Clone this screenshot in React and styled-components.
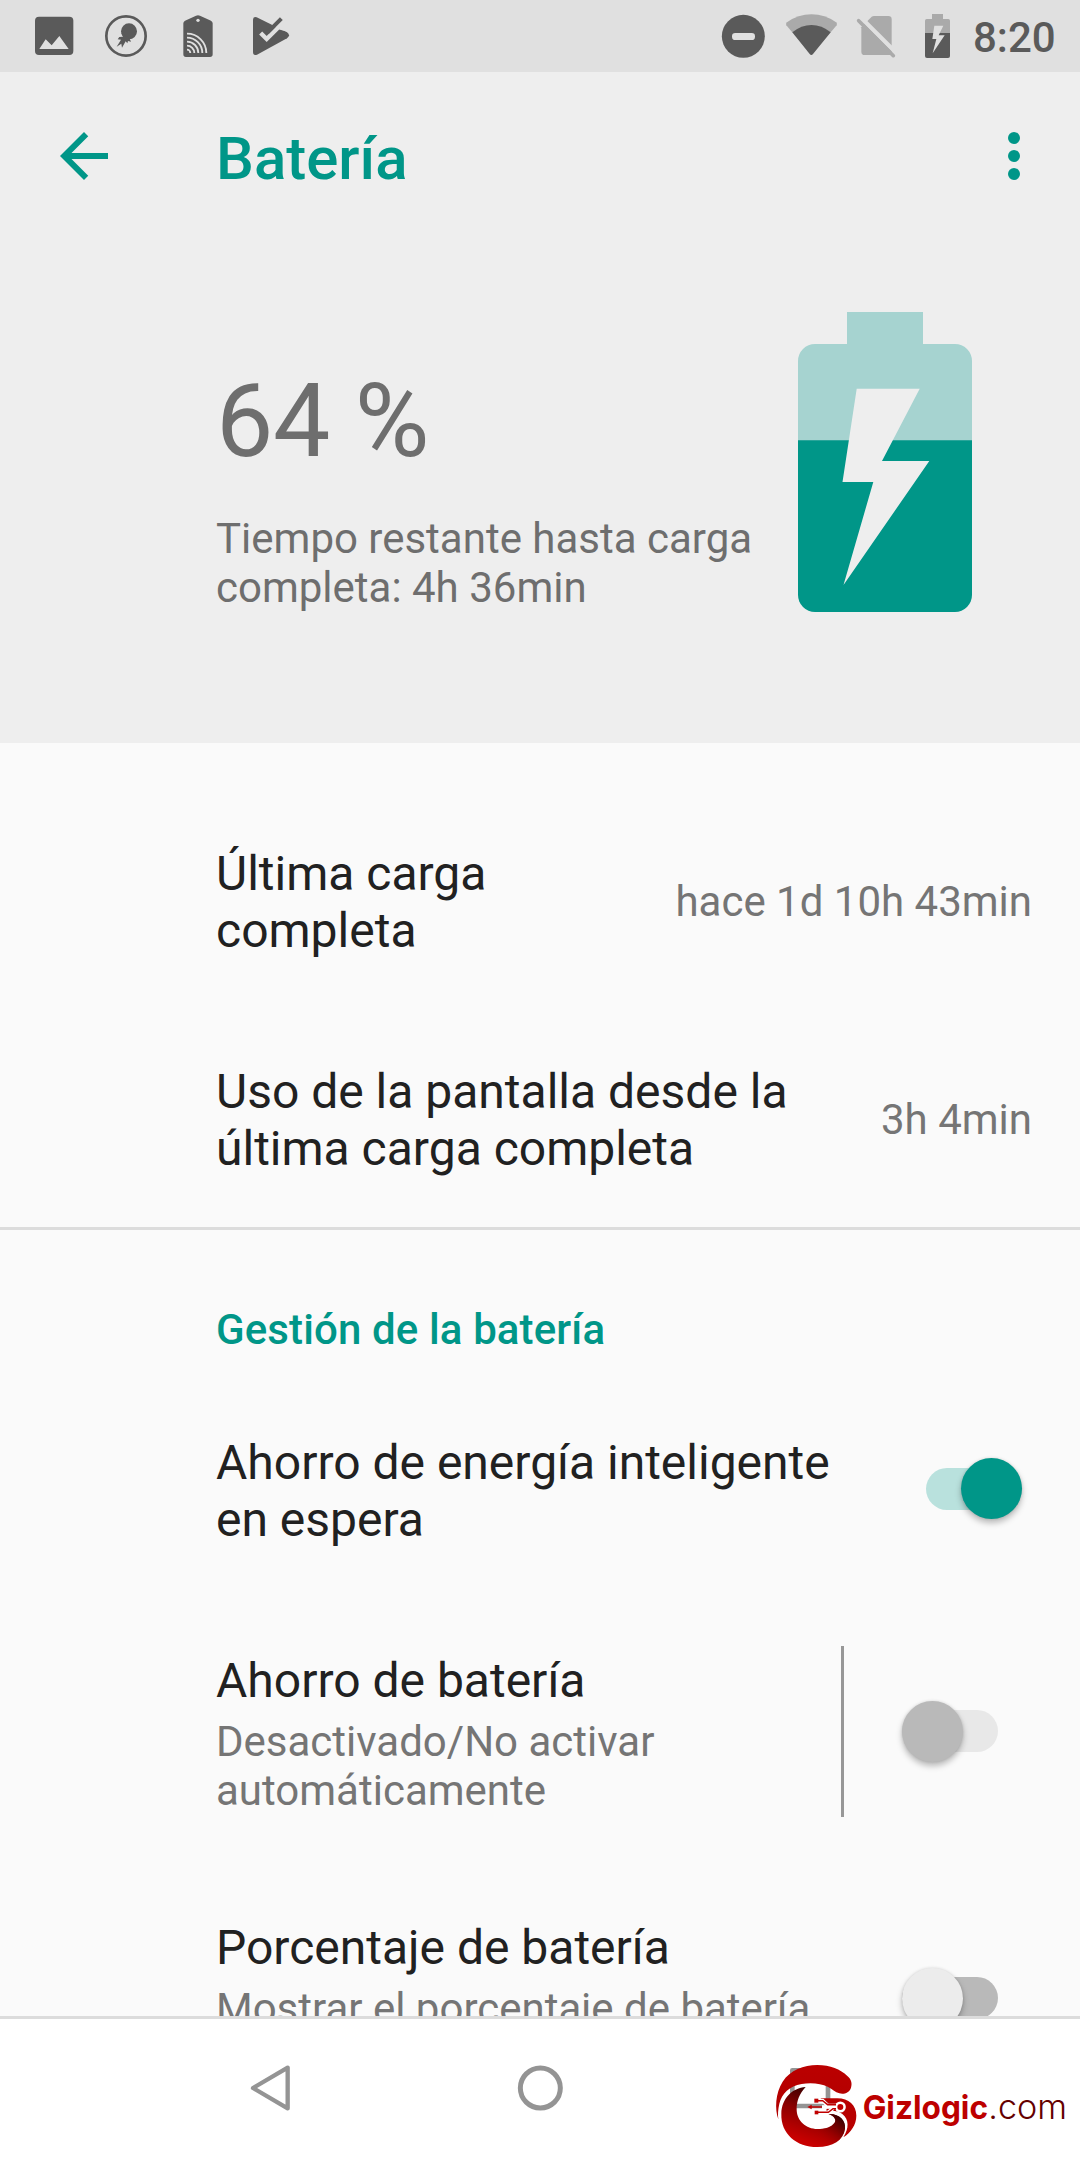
import { useState } from "react";
import styled, { createGlobalStyle } from "styled-components";


const GlobalStyle = createGlobalStyle`
    * {
        box-sizing: border-box;
    }

    body {
        margin: 0;
        background: #fafafa;
        font-family: Roboto, sans-serif;
    }
`;

const Screen = styled.div`
    position: relative;
    display: flex;
    flex-direction: column;
    width: 1080px;
    height: 2160px;
    overflow: hidden;
    background: #fafafa;
`;

const StatusBar = styled.div`
    display: flex;
    justify-content: space-between;
    flex: none;
    height: 72px;
    padding: 13px 0 0 30px;
    background: #e0e0e0;
    color: #5a5a5a;
`;

const Notifications = styled.div`
    display: flex;
    gap: 24px;
`;

const SystemIcons = styled.div`
    display: flex;
    width: 361px;
`;

const Icon = styled.svg`
    display: block;
    flex: none;
    width: ${(props) => props.$w || 48}px;
    height: ${(props) => props.$h || 48}px;
`;

const Clock = styled.div`
    padding: 0 0 0 7px;
    font-size: 42px;
    font-weight: 500;
    line-height: 49px;
`;

const Header = styled.header`
    flex: none;
    height: 671px;
    background: #eeeeee;
`;

const Toolbar = styled.div`
    display: flex;
    align-items: center;
    height: 168px;
    padding: 0 30px 0 48px;
    color: #009688;
`;

const Title = styled.h1`
    flex: 1;
    margin: 0;
    padding: 5px 0 0 96px;
    font-size: 60px;
    font-weight: 500;
    line-height: 71px;
`;

const IconButton = styled.button`
    width: 72px;
    height: 72px;
    padding: 0;
    border: 0;
    background: none;
    color: inherit;
`;

const Summary = styled.div`
    display: flex;
    justify-content: space-between;
    padding: 72px 108px 0 216px;
    color: #6e6e6e;
`;

const Level = styled.div`
    padding-top: 49px;
    font-size: 102px;
    line-height: 120px;
    letter-spacing: -0.4px;
`;

const TimeLeft = styled.div`
    width: 560px;
    margin-top: 33px;
    font-size: 42px;
    line-height: 49px;
`;

const List = styled.main`
    flex: 1;
    min-height: 0;
    padding-top: 50px;
    overflow: hidden;
`;

const Row = styled.div`
    display: flex;
    align-items: center;
    gap: 48px;
    padding: 52px ${(props) => props.$right || 48}px 52px 216px;
`;

const LastRow = styled(Row)`
    padding-bottom: 50px;
    border-bottom: 3px solid #dcdcdc;
`;

const RowText = styled.div`
    flex: 1;
`;

const RowTitle = styled.div`
    color: #212121;
    font-size: 48px;
    line-height: 57px;
`;

const RowSummary = styled.div`
    min-height: 98px;
    margin-top: 8px;
    color: #757575;
    font-size: 42px;
    line-height: 49px;
`;

const Value = styled.div`
    margin-bottom: 2px;
    color: #757575;
    font-size: 42px;
    line-height: 49px;
    white-space: nowrap;
`;

const Category = styled.h2`
    margin: 0;
    padding: 75px 0 28px 216px;
    color: #009688;
    font-size: 42px;
    font-weight: 500;
    line-height: 49px;
    letter-spacing: 0.12px;
`;

const Separator = styled.div`
    width: 3px;
    height: 171px;
    margin: -50px 10px -46px 0;
    background: #979797;
`;

const colors = {
    on: { track: "#b9e1dd", thumb: "#009688" },
    off: { track: "#b9b9b9", thumb: "#ececec" },
    disabled: { track: "#e8e8e8", thumb: "#b9b9b9" },
};

const Track = styled.button`
    display: flex;
    align-items: center;
    justify-content: ${(props) => (props.$kind === "on" ? "flex-end" : "flex-start")};
    flex: none;
    width: 96px;
    height: 42px;
    margin-bottom: 5px;
    padding: 0;
    border: 0;
    border-radius: 21px;
    background: ${(props) => colors[props.$kind].track};
`;

const Thumb = styled.span`
    flex: none;
    width: 61px;
    height: 61px;
    border-radius: 50%;
    background: ${(props) => colors[props.$kind].thumb};
    box-shadow: 0 4px 6px rgba(0, 0, 0, 0.26), 0 0 3px rgba(0, 0, 0, 0.12);
`;

const NavBar = styled.nav`
    display: grid;
    grid-template-columns: repeat(3, 270px);
    justify-content: center;
    align-items: center;
    justify-items: center;
    flex: none;
    height: 144px;
    padding-bottom: 3px;
    border-top: 3px solid #dcdcdc;
    background: #ffffff;
    color: #949494;
`;

// sits over the navigation bar
const Watermark = styled.svg`
    position: absolute;
    right: 0;
    bottom: 0;
    width: 320px;
    height: 130px;
    font-family: Inter, sans-serif;
    font-size: 100px;
`;


function Switch({ kind, onClick }){
    return(
        <Track $kind={kind} onClick={onClick}>
            <Thumb $kind={kind} />
        </Track>
    );
}

function NotificationIcons(){
    return(
        <Notifications>
            <Icon viewBox="90 39 144 144" fill="currentColor">
                <rect x="105" y="50" width="115" height="115" rx="12" />
                <path d="M118 147L137 118L155 136L178 108L206 147Z" fill="#e0e0e0" />
            </Icon>

            <Icon viewBox="306 39 144 144" fill="currentColor">
                <circle cx="378" cy="108" r="59" fill="none" stroke="currentColor" strokeWidth="8" />
                <circle cx="387" cy="94" r="24" />
                <path d="M364 99L369 110L358 111L353 118L363 119L350 140L364 131L366 143L377 124L382 130L384 123L393 125L389 116Z" />
            </Icon>

            <Icon viewBox="522 39 144 144" fill="currentColor">
                <path d="M550 70Q550 65 555 62L588 47Q594 44 600 47L633 62Q638 65 638 70V163Q638 171 630 171H558Q550 171 550 163Z" />
                <circle cx="594" cy="61" r="5" fill="#e0e0e0" />
                <g fill="none" stroke="#e0e0e0" strokeWidth="5.5">
                    <path d="M561 101A58 58 0 0 1 619 159" />
                    <path d="M561 113A46 46 0 0 1 607 159" />
                    <path d="M561 125A34 34 0 0 1 595 159" />
                    <path d="M561 137A22 22 0 0 1 583 159" />
                    <path d="M561 149A10 10 0 0 1 571 159" />
                </g>
            </Icon>

            <Icon viewBox="738 39 144 144" fill="currentColor">
                <path d="M759 59Q759 48 770 52L861 97Q873 106 861 115L771 164Q759 168 759 156Z" />
                <path d="M815 75L840 50L870 90L845 92Z" fill="#e0e0e0" />
                <path d="M782 99L800 117L852 65" fill="none" stroke="#e0e0e0" strokeWidth="13" />
                <path d="M802 98L844 56" stroke="currentColor" strokeWidth="12" />
                <path d="M820 110L842 89L862 99L850 115Z" />
            </Icon>
        </Notifications>
    );
}

function StatusIcons(){
    return(
        <SystemIcons>
            <Icon $w={56} viewBox="57 39 168 144">
                <circle cx="130" cy="109" r="64.5" fill="currentColor" />
                <rect x="96" y="99" width="69" height="21" rx="10" fill="#e0e0e0" />
            </Icon>

            <Icon $w={72} viewBox="225 39 216 144">
                <path d="M334 165L259 76Q256 71 261 67Q294 43 334.5 43Q375 43 408 67Q413 71 410 76Z" fill="#aaaaaa" />
                <path d="M277 97Q304 75 334.500 75Q365 75 392 97L339 162Q334 168 329 162Z" fill="currentColor" />
            </Icon>

            <Icon $w={62} viewBox="441 39 186 144">
                <path d="M484 82L515 50Q518 48 522 48H565Q575 48 575 58V155Q575 165 565 165H494Q484 165 484 155Z" fill="#aaaaaa" />
                <path d="M486 56L590 160" stroke="#e0e0e0" strokeWidth="13" />
                <path d="M476 62L580 167" stroke="#aaaaaa" strokeWidth="11" strokeLinecap="round" />
            </Icon>

            <Icon $w={57} viewBox="627 39 171 144">
                <path d="M675 99V62Q675 57 680 57H696V42H729V57H745Q750 57 750 62V99Z" fill="#aaaaaa" />
                <path d="M675 99H750V168Q750 174 744 174H681Q675 174 675 168Z" fill="currentColor" />
                <path d="M703 77H730L716 106H734L698 160L709 117H697Z" fill="#e0e0e0" />
            </Icon>

            <Clock>8:20</Clock>
        </SystemIcons>
    );
}

function BatteryMeter(){
    return(
        <Icon $w={174} $h={300} viewBox="0 0 174 300">
            <path d="M0 129V49A17 17 0 0 1 17 32H49V0H125V32H157A17 17 0 0 1 174 49V129Z" fill="#a6d3d0" />
            <path d="M0 128.300H174V283A17 17 0 0 1 157 300H17A17 17 0 0 1 0 283Z" fill="#009688" />
            <path d="M58.700 76.700H121.700L84 149H131.300L45.500 273L75.300 170H44.500Z" fill="#eeeeee" />
        </Icon>
    );
}

function Logo(){
    return(
        <Watermark viewBox="0 0 960 390">
            <defs>
                <linearGradient id="bowl" gradientUnits="userSpaceOnUse" x1="150" y1="175" x2="95" y2="320">
                    <stop offset="0" stopColor="#3a0000" />
                    <stop offset="0.45" stopColor="#8a0000" />
                    <stop offset="1" stopColor="#c80000" />
                </linearGradient>
                <linearGradient id="tail" gradientUnits="userSpaceOnUse" x1="250" y1="265" x2="185" y2="340">
                    <stop offset="0" stopColor="#300000" />
                    <stop offset="1" stopColor="#c80000" stopOpacity="0" />
                </linearGradient>
                <linearGradient id="hook" x1="0" y1="0" x2="0" y2="1">
                    <stop offset="0" stopColor="#bb0000" />
                    <stop offset="1" stopColor="#b00000" />
                </linearGradient>
            </defs>

            <path d="M55 268C44 236 46 190 68 155C91 120 131 105 172 105C211 105 241 118 262 138C274 148 277 160 273 173C268 188 252 194 238 190C226 187 216 176 203 170C184 160 151 157 125 162C88 169 66 190 58 221C54 238 53 254 55 268Z" fill="url(#hook)" />
            <path d="M137 171C97 174 65 205 64 251C62 311 109 351 172 351C218 351 250 331 255 296C258 270 236 250 205 252C223 258 230 269 224 278C214 292 194 297 172 297C138 297 111 272 110 240C109 213 119 190 137 171Z" fill="url(#bowl)" />
            <path d="M205 252C223 258 230 269 224 278C214 292 194 297 172 297L172 351C218 351 250 331 255 296C258 270 236 250 205 252Z" fill="url(#tail)" />
            <path d="M181 205H232C266 205 289 226 289 257C289 284 273 307 250 322C267 296 268 269 247 252C234 241 214 241 198 244L205 220Z" fill="#b80000" />

            <g fill="none" stroke="#ffffff" strokeWidth="11">
                <path d="M170 212H188L203 227H232" />
                <path d="M186 231H232" />
                <path d="M170 247H205L220 234" />
                <circle cx="241" cy="231" r="11" />
            </g>
            <g fill="none" stroke="#c00000" strokeWidth="4.5">
                <path d="M170 212H188L203 224H228" />
                <path d="M150 231H186" />
                <path d="M170 247H205L219 236H228" />
            </g>
            <g fill="#c00000">
                <rect x="163" y="206" width="12" height="12" />
                <path d="M142 231L155 224V238Z" />
                <rect x="164" y="242" width="11" height="11" />
                <circle cx="241" cy="231" r="9" />
            </g>

            <text x="308" y="266" fill="#bd0000" fontWeight="700" textLength="376" lengthAdjust="spacingAndGlyphs">Gizlogic</text>
            <text x="685" y="266" fill="#650000" fontWeight="300" textLength="236" lengthAdjust="spacingAndGlyphs">.com</text>
        </Watermark>
    );
}


export default function App(){

    const [standby, setStandby] = useState(true)
    const [percentage, setPercentage] = useState(false)

    return(
        <Screen>
            <GlobalStyle />

            <StatusBar>
                <NotificationIcons />
                <StatusIcons />
            </StatusBar>

            <Header>
                <Toolbar>
                    <IconButton>
                        <Icon $w={72} $h={72} viewBox="0 0 24 24" fill="currentColor">
                            <path d="M20 11H7.830l5.590-5.590L12 4l-8 8 8 8 1.410-1.410L7.830 13H20v-2z" />
                        </Icon>
                    </IconButton>
                    <Title>Batería</Title>
                    <IconButton>
                        <Icon $w={72} $h={72} viewBox="0 0 24 24" fill="currentColor">
                            <circle cx="12" cy="6" r="2" />
                            <circle cx="12" cy="12" r="2" />
                            <circle cx="12" cy="18" r="2" />
                        </Icon>
                    </IconButton>
                </Toolbar>

                <Summary>
                    <div>
                        <Level>64 %</Level>
                        <TimeLeft>Tiempo restante hasta carga completa: 4h 36min</TimeLeft>
                    </div>
                    <BatteryMeter />
                </Summary>
            </Header>

            <List>
                <Row>
                    <RowText>
                        <RowTitle>Última carga completa</RowTitle>
                    </RowText>
                    <Value>hace 1d 10h 43min</Value>
                </Row>

                <LastRow>
                    <RowText>
                        <RowTitle>Uso de la pantalla desde la última carga completa</RowTitle>
                    </RowText>
                    <Value>3h 4min</Value>
                </LastRow>

                <Category>Gestión de la batería</Category>

                <Row $right={58}>
                    <RowText>
                        <RowTitle>Ahorro de energía inteligente en espera</RowTitle>
                    </RowText>
                    <Switch kind={standby ? "on" : "off"} onClick={() => setStandby(!standby)} />
                </Row>

                <Row $right={82}>
                    <RowText>
                        <RowTitle>Ahorro de batería</RowTitle>
                        <RowSummary>Desactivado/No activar automáticamente</RowSummary>
                    </RowText>
                    <Separator />
                    <Switch kind="disabled" />
                </Row>

                <Row $right={82}>
                    <RowText>
                        <RowTitle>Porcentaje de batería</RowTitle>
                        <RowSummary>Mostrar el porcentaje de batería</RowSummary>
                    </RowText>
                    <Switch kind={percentage ? "on" : "off"} onClick={() => setPercentage(!percentage)} />
                </Row>
            </List>

            <NavBar>
                <Icon viewBox="0 0 144 144" fill="none" stroke="currentColor" strokeWidth="13" strokeLinejoin="round">
                    <path d="M21 72L125 11V133Z" />
                </Icon>
                <Icon viewBox="0 0 144 144" fill="none" stroke="currentColor" strokeWidth="15">
                    <circle cx="73" cy="72" r="60" />
                </Icon>
                <Icon viewBox="0 0 144 144" fill="none" stroke="currentColor" strokeWidth="14" strokeLinejoin="round">
                    <rect x="19" y="19" width="107" height="107" />
                </Icon>
            </NavBar>

            <Logo />
        </Screen>
    );
}
